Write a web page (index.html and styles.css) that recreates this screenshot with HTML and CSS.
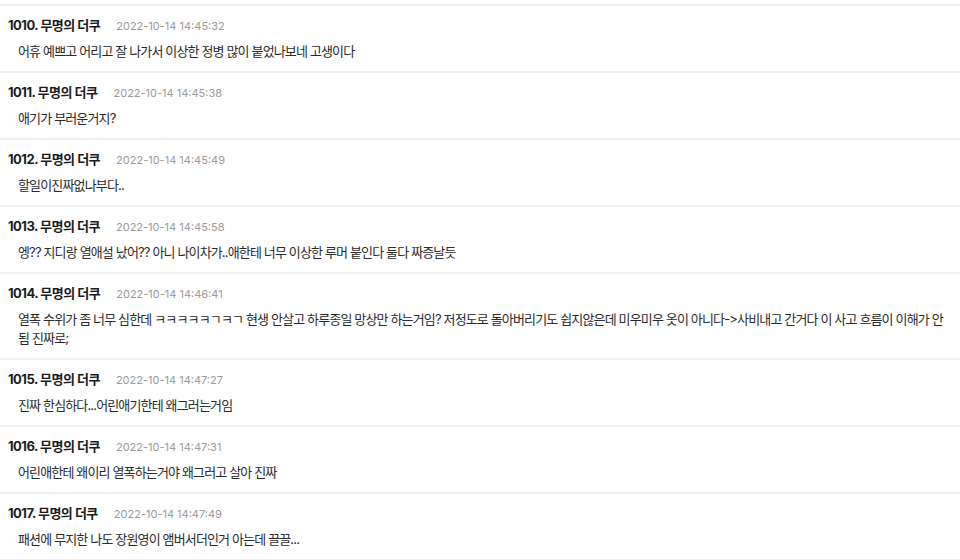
FILE: index.html
```html
<!DOCTYPE html>
<html lang="ko">
<head>
<meta charset="utf-8">
<link rel="stylesheet" href="styles.css">
</head>
<body>
<div class="list">
  <div class="top-rule"></div>
  <div class="item">
    <div class="head"><span class="name">1010. 무명의 더쿠</span><span class="date">2022-10-14 14:45:32</span></div>
    <div class="body">어휴 예쁘고 어리고 잘 나가서 이상한 정병 많이 붙었나보네 고생이다</div>
  </div>
  <div class="item">
    <div class="head"><span class="name">1011. 무명의 더쿠</span><span class="date">2022-10-14 14:45:38</span></div>
    <div class="body">애기가 부러운거지?</div>
  </div>
  <div class="item">
    <div class="head"><span class="name">1012. 무명의 더쿠</span><span class="date">2022-10-14 14:45:49</span></div>
    <div class="body">할일이진짜없나부다..</div>
  </div>
  <div class="item">
    <div class="head"><span class="name">1013. 무명의 더쿠</span><span class="date">2022-10-14 14:45:58</span></div>
    <div class="body">엥?? 지디랑 열애설 났어?? 아니 나이차가..애한테 너무 이상한 루머 붙인다 둘다 짜증날듯</div>
  </div>
  <div class="item">
    <div class="head"><span class="name">1014. 무명의 더쿠</span><span class="date">2022-10-14 14:46:41</span></div>
    <div class="body">열폭 수위가 좀 너무 심한데 ㅋㅋㅋㅋㅋㄱㅋㄱ 현생 안살고 하루종일 망상만 하는거임? 저정도로 돌아버리기도 쉽지않은데 미우미우 옷이 아니다-&gt;사비내고 간거다 이 사고 흐름이 이해가 안 됨 진짜로;</div>
  </div>
  <div class="item">
    <div class="head"><span class="name">1015. 무명의 더쿠</span><span class="date">2022-10-14 14:47:27</span></div>
    <div class="body">진짜 한심하다...어린애기한테 왜그러는거임</div>
  </div>
  <div class="item">
    <div class="head"><span class="name">1016. 무명의 더쿠</span><span class="date">2022-10-14 14:47:31</span></div>
    <div class="body">어린애한테 왜이리 열폭하는거야 왜그러고 살아 진짜</div>
  </div>
  <div class="item">
    <div class="head"><span class="name">1017. 무명의 더쿠</span><span class="date">2022-10-14 14:47:49</span></div>
    <div class="body">패션에 무지한 나도 장원영이 앰버서더인거 아는데 끌끌...</div>
  </div>
</div>
</body>
</html>
```

FILE: styles.css
```css
html, body {
  margin: 0;
  padding: 0;
  background: #ffffff;
}
body {
  font-family: "Inter", "Noto Sans CJK KR", sans-serif;
  color: #222222;
  overflow: hidden;
  height: 560px;
}
.list {
  display: flex;
  flex-direction: column;
}
.top-rule {
  height: 4px;
  border-bottom: 2px solid #f0f0f0;
}
.item {
  padding: 11px 8px 10px 8px;
  border-bottom: 2px solid #f0f0f0;
}
.head {
  display: flex;
  align-items: baseline;
  gap: 16px;
  height: 16px;
  line-height: 16px;
  margin-bottom: 9px;
}
.name {
  font-size: 13px;
  font-weight: 700;
  color: #1c1c1c;
  letter-spacing: -0.5px;
}
.date {
  font-size: 11px;
  color: #9a9a9a;
}
.body {
  padding-left: 10px;
  font-size: 13px;
  line-height: 19px;
  color: #2a2a2a;
  letter-spacing: -0.85px;
}
```
